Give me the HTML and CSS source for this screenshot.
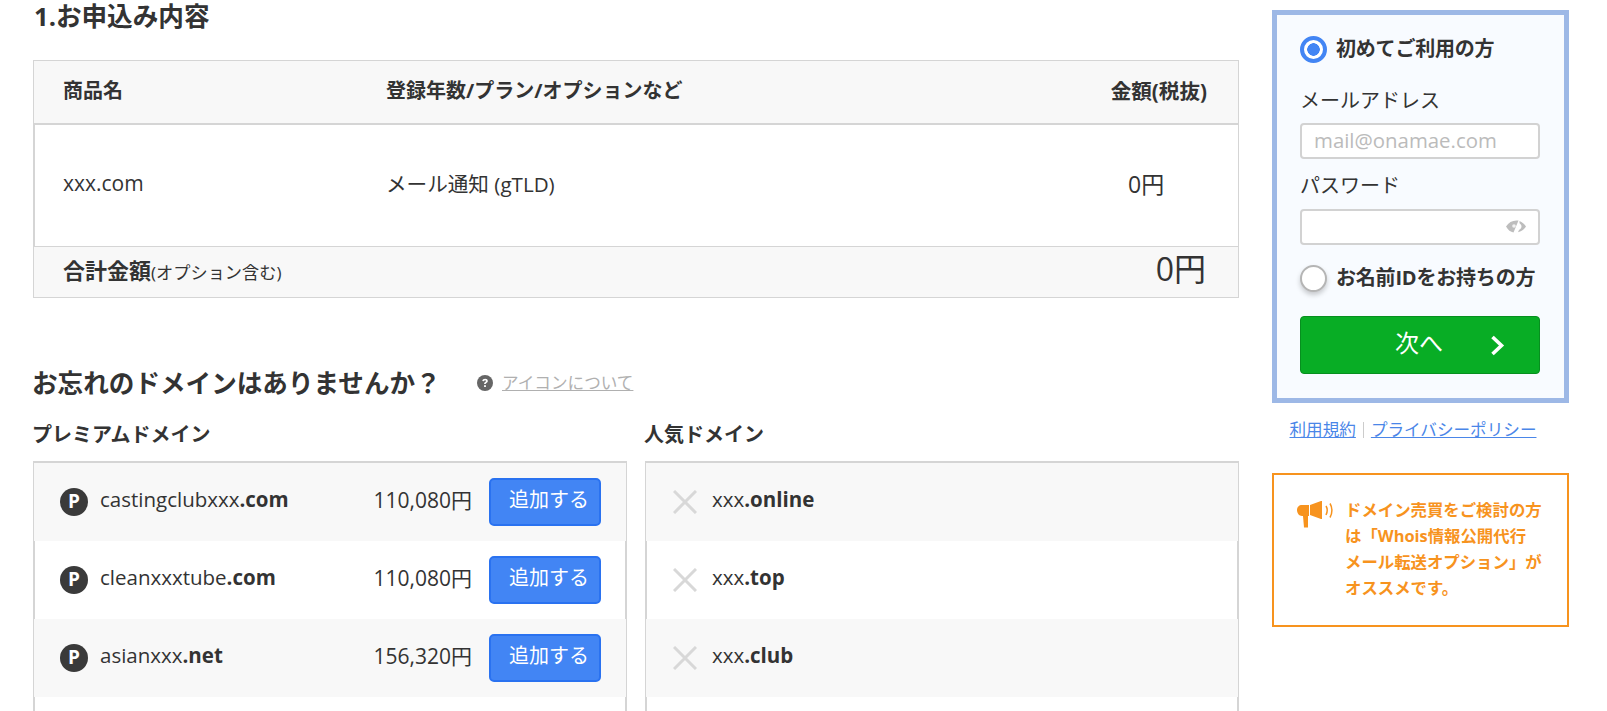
FILE: index.html
```html
<!DOCTYPE html>
<html lang="ja">
<head>
<meta charset="utf-8">
<title>お申込み内容</title>
<link rel="stylesheet" href="styles.css">
</head>
<body>
<div class="page">
  <main class="main">
    <h1 class="title">1.お申込み内容</h1>
    <section class="order">
      <div class="order-head">
        <div class="col-name">商品名</div>
        <div class="col-plan">登録年数/プラン/オプションなど</div>
        <div class="col-price">金額(税抜)</div>
      </div>
      <div class="order-body">
        <div class="col-name">xxx.com</div>
        <div class="col-plan">メール通知 (gTLD)</div>
        <div class="col-yen">0円</div>
      </div>
      <div class="order-total">
        <div class="total-label"><strong>合計金額</strong><small>(オプション含む)</small></div>
        <div class="total-yen">0円</div>
      </div>
    </section>

    <div class="forgot">
      <h2 class="forgot-title">お忘れのドメインはありませんか？</h2>
      <svg class="help" viewBox="0 0 16 16" aria-hidden="true"><circle cx="8" cy="8" r="8" fill="#666"/><path d="M5.3 6.1c.1-1.6 1.3-2.4 2.8-2.4 1.6 0 2.7.9 2.7 2.2 0 1-.6 1.5-1.3 2-.6.4-.8.6-.8 1.2H7.1c0-1.1.3-1.6 1.1-2.1.5-.4.8-.6.8-1 0-.4-.4-.7-.9-.7-.6 0-1 .3-1.1.9z" fill="#fff"/><rect x="7.1" y="10.2" width="1.8" height="1.8" fill="#fff"/></svg>
      <a class="help-link" href="#">アイコンについて</a>
    </div>

    <div class="lists">
      <section class="list-col">
        <h3 class="list-title">プレミアムドメイン</h3>
        <div class="list">
          <div class="row alt">
            <span class="p-icon">P</span>
            <span class="domain">castingclubxxx<b>.com</b></span>
            <span class="price">110,080円</span>
            <button class="add">追加する</button>
          </div>
          <div class="row">
            <span class="p-icon">P</span>
            <span class="domain">cleanxxxtube<b>.com</b></span>
            <span class="price">110,080円</span>
            <button class="add">追加する</button>
          </div>
          <div class="row alt">
            <span class="p-icon">P</span>
            <span class="domain">asianxxx<b>.net</b></span>
            <span class="price">156,320円</span>
            <button class="add">追加する</button>
          </div>
          <div class="row"></div>
        </div>
      </section>
      <section class="list-col">
        <h3 class="list-title">人気ドメイン</h3>
        <div class="list">
          <div class="row alt">
            <svg class="x-icon" viewBox="0 0 24 24" aria-hidden="true"><path d="M1 1l22 22M23 1L1 23" stroke="#d8d8d8" stroke-width="3" fill="none"/></svg>
            <span class="domain">xxx<b>.online</b></span>
          </div>
          <div class="row">
            <svg class="x-icon" viewBox="0 0 24 24" aria-hidden="true"><path d="M1 1l22 22M23 1L1 23" stroke="#d8d8d8" stroke-width="3" fill="none"/></svg>
            <span class="domain">xxx<b>.top</b></span>
          </div>
          <div class="row alt">
            <svg class="x-icon" viewBox="0 0 24 24" aria-hidden="true"><path d="M1 1l22 22M23 1L1 23" stroke="#d8d8d8" stroke-width="3" fill="none"/></svg>
            <span class="domain">xxx<b>.club</b></span>
          </div>
          <div class="row"></div>
        </div>
      </section>
    </div>
  </main>

  <aside class="side">
    <form class="login">
      <div class="radio-line"><span class="radio on"></span><span class="radio-text">初めてご利用の方</span></div>
      <div class="field-label first">メールアドレス</div>
      <input class="field" type="text" placeholder="mail@onamae.com">
      <div class="field-label second">パスワード</div>
      <div class="pw">
        <input class="field" type="text">
        <svg class="eye" viewBox="0 0 20 13" aria-hidden="true"><path d="M0 6.5C2.500 2.500 6 .5 10.500 .5l2 0-5 12C4.500 12 2 10 0 6.500z" fill="#bdbdbd"/><circle cx="8" cy="6" r="1.800" fill="#f2f2f2"/><path d="M13.500 1C16 2 18.500 4 20 6.500 18.500 9 16 11.200 12 12.300l1-2.300c1.500-.8 2.500-2 2.500-3.500 0-1.500-.8-2.500-2-3.300z" fill="#bdbdbd"/></svg>
      </div>
      <div class="radio-line two"><span class="radio off"></span><span class="radio-text">お名前IDをお持ちの方</span></div>
      <button class="next" type="button">
        <span>次へ</span>
        <svg class="chev" viewBox="0 0 15 21" aria-hidden="true"><path d="M2.500 2l9 8.500-9 8.500" stroke="#fff" stroke-width="3.600" fill="none"/></svg>
      </button>
    </form>
    <div class="legal"><a href="#">利用規約</a><i class="sep"></i><a href="#">プライバシーポリシー</a></div>
    <div class="notice">
      <svg class="mega" viewBox="0 0 36 27" aria-hidden="true"><path d="M0 9c0-3 2-5 5-5h7v11H5c-3 0-5-3-5-6z" fill="#f7931e"/><path d="M13 4l11-4h1v18h-1L13 14z" fill="#f7931e"/><path d="M6 15h5v11.500H7z" fill="#f7931e"/><path d="M29 5c1.500 2.500 1.500 6 0 9M33 2.500c2.500 4 2.500 10 0 14" stroke="#f7931e" stroke-width="1.500" fill="none"/></svg>
      <p class="notice-text">ドメイン売買をご検討の方<br>は「Whois情報公開代行<br>メール転送オプション」が<br>オススメです。</p>
    </div>
  </aside>
</div>
</body>
</html>
```
FILE: styles.css
```css
* { box-sizing: border-box; }
html, body { margin: 0; padding: 0; height: 711px; overflow: hidden; }
body { background: #fff; color: #333; font-family: "Open Sans", "Noto Sans CJK JP", sans-serif; font-size: 20px; }
.page { display: flex; gap: 33px; padding-left: 33px; align-items: flex-start; height: 711px; overflow: hidden; }
.main { width: 1206px; flex: none; }
.title { margin: 0 0 0 1px; font-size: 25.600px; line-height: 34px; font-weight: 700; height: 60px; }

.order-head, .order-body, .order-total { display: flex; align-items: center; padding-left: 29px; }
.order-head { height: 65px; background: #f8f8f8; border: 1px solid #d5d5d5; border-bottom: 2px solid #d5d5d5; font-size: 20px; font-weight: 700; padding: 0 31px 5px 29px; }
.order-head .col-price { font-size: 20.600px; }
.order-body { height: 121px; border-left: 2px solid #d5d5d5; border-right: 1px solid #d5d5d5; padding: 0 0 5px 28px; }
.order-body .col-name { font-size: 21px; }
.order-body .col-plan { font-size: 20.600px; }
.order-total { height: 52px; background: #f8f8f8; border: 1px solid #d5d5d5; justify-content: space-between; padding: 0 32px 6px 29px; }
.col-name { width: 323px; flex: none; }
.col-plan { flex: 1; }
.col-yen { width: 110px; flex: none; font-size: 23px; }
.total-label strong { font-size: 22px; }
.total-label small { font-size: 17.200px; }
.total-yen { font-size: 32px; line-height: 1; }

.forgot { display: flex; align-items: center; margin-top: 62px; height: 44px; }
.forgot-title { margin: 3px 0 0 -1px; font-size: 25.600px; font-weight: 700; line-height: 44px; width: 445px; flex: none; white-space: nowrap; }
.help { width: 16px; height: 16px; flex: none; margin-top: 1px; }
.help-link { margin-left: 9px; color: #b0b0b0; font-size: 16.600px; text-decoration: underline; }

.lists { display: grid; grid-template-columns: 594px 594px; column-gap: 18px; margin-top: 14px; }
.list-title { margin: 0 0 0 -1px; padding-top: 2px; font-size: 20px; font-weight: 700; line-height: 30px; height: 43px; }
.list { border: solid #d5d5d5; border-width: 2px 2px 0; height: 260px; }
.row { height: 78px; display: flex; align-items: center; padding: 0 24px 0 25px; }
.row.alt { background: #f8f8f8; margin: 0 -1px; padding: 0 25px 0 26px; }
.p-icon { width: 28px; height: 28px; flex: none; border-radius: 50%; background: #3a3a3a; color: #fff; font-size: 19px; font-weight: 700; line-height: 27px; text-align: center; }
.domain { margin: 0 0 6px 12px; flex: 1; font-size: 20.500px; white-space: nowrap; }
.price { font-size: 21px; margin: 0 17px 6px 0; }
.add { width: 112px; height: 48px; background: #4285f4; border: 2px solid #2a72f0; border-radius: 5px; color: #fff; font: inherit; font-size: 20px; padding: 0 0 8px 8px; }
.x-icon { width: 24px; height: 24px; flex: none; margin-left: 1px; }
.x-icon + .domain { margin-left: 15px; }

.side { width: 297px; flex: none; padding-top: 10px; }
.login { height: 393px; background: #f8fbff; border: 5px solid #9db8e6; padding: 21px 24px 0 23px; }
.radio-line { display: flex; align-items: center; gap: 9px; height: 27px; }
.radio-text { font-size: 20px; font-weight: 700; white-space: nowrap; margin-bottom: 5px; letter-spacing: -.2px; }
.radio { width: 27px; height: 27px; flex: none; border-radius: 50%; background: #fff; }
.radio.on { border: 4px solid #4285f4; background: radial-gradient(circle, #4285f4 0 6px, #fff 6.500px); }
.radio.off { border: 2px solid #b5b5b5; box-shadow: 0 3px 5px rgba(0,0,0,.2); }
.field-label { font-size: 20px; line-height: 30px; }
.field-label.first { margin-top: 23px; height: 37px; }
.field-label.second { margin-top: 12px; height: 38px; }
.field { display: block; width: 240px; height: 36px; border: 2px solid #d2d2d2; border-radius: 4px; background: #fff; padding: 0 12px 3px; font: inherit; font-size: 20.400px; }
.field::placeholder { color: #bbb; opacity: 1; }
.pw { position: relative; }
.eye { position: absolute; right: 14px; top: 11px; width: 20px; height: 13px; }
.radio-line.two { margin-top: 20px; }
.next { display: flex; align-items: center; width: 240px; height: 58px; margin-top: 24px; background: #08ad25; border: 1px solid #078f1f; border-radius: 4px; color: #fff; font: inherit; font-size: 24px; padding: 0 0 8px 94px; position: relative; }
.chev { position: absolute; right: 34px; top: 18px; width: 15px; height: 21px; }
.legal { display: flex; justify-content: center; align-items: center; margin-top: 15px; font-size: 16.600px; line-height: 24px; padding-right: 15px; }
.legal a { color: #4a86e8; }
.sep { width: 1px; height: 16px; background: #ccc; margin: 0 7px; }
.notice { display: flex; margin-top: 31px; height: 154px; border: 2px solid #f7931e; padding: 22px 10px 0 23px; }
.mega { width: 36px; height: 27px; flex: none; margin-top: 4px; }
.notice-text { margin: 0 0 0 12px; color: #f7931e; font-size: 16.400px; font-weight: 700; line-height: 26px; white-space: nowrap; }
```
